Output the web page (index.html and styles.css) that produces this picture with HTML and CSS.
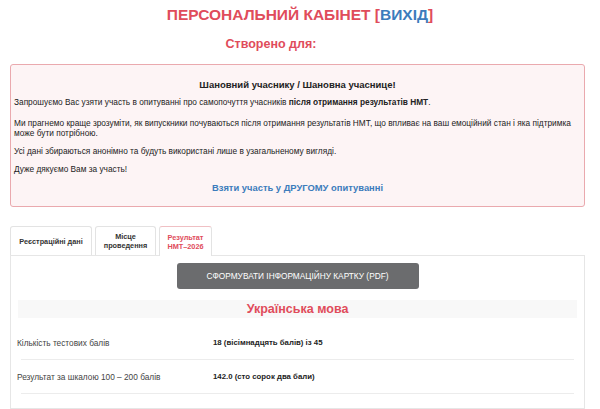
FILE: index.html
```html
<!DOCTYPE html>
<html lang="uk">
<head>
    <meta charset="UTF-8">
    <meta name="viewport" content="width=device-width, initial-scale=1.0">
    <title>Персональний кабінет</title>
    <link rel="stylesheet" href="styles.css">
</head>
<body>
<h1 class="title">ПЕРСОНАЛЬНИЙ КАБІНЕТ [<a href="#" class="logout">ВИХІД</a>]</h1>
<h2 class="created">Створено для:</h2>

<div class="notice">
    <h3>Шановний учаснику / Шановна учаснице!</h3>
    <p class="lead">Запрошуємо Вас узяти участь в опитуванні про самопочуття учасників <b>після отримання результатів НМТ</b>.</p>
    <p>Ми прагнемо краще зрозуміти, як випускники почуваються після отримання результатів НМТ, що впливає на ваш емоційний стан і яка підтримка може бути потрібною.</p>
    <p>Усі дані збираються анонімно та будуть використані лише в узагальненому вигляді.</p>
    <p>Дуже дякуємо Вам за участь!</p>
    <a href="#" class="survey-link">Взяти участь у ДРУГОМУ опитуванні</a>
</div>

<div class="tabs">
    <div class="tab">Реєстраційні дані</div>
    <div class="tab">Місце<br>проведення</div>
    <div class="tab active">Результат<br>НМТ–2026</div>
</div>

<div class="panel">
    <div class="actions">
        <button class="button">СФОРМУВАТИ ІНФОРМАЦІЙНУ КАРТКУ (PDF)</button>
    </div>
    <div class="subject">Українська мова</div>
    <div class="row">
        <div class="label">Кількість тестових балів</div>
        <div class="value">18 (вісімнадцять балів) із 45</div>
    </div>
    <div class="row">
        <div class="label">Результат за шкалою 100 – 200 балів</div>
        <div class="value">142.0 (сто сорок два бали)</div>
    </div>
</div>
</body>
</html>
```

FILE: styles.css
```css
body {
    margin: 0;
    font-family: "Liberation Sans", Arial, sans-serif;
    color: #222;
}

.title {
    margin: 0;
    padding-top: 5px;
    text-align: center;
    font-size: 15.5px;
    line-height: 20px;
    color: #e04c5b;
}
.logout { color: #3c7cbc; text-decoration: none; }

.created {
    margin: 0;
    padding: 11px 58px 0 0;
    text-align: center;
    font-size: 12.5px;
    line-height: 16px;
    color: #e04c5b;
}

.notice {
    margin: 12px 15px 0 10px;
    padding: 14px 3px 12px;
    background: #fdf4f5;
    border: 1px solid #eaa9ae;
    border-radius: 3px;
    text-align: center;
}
.notice h3 {
    margin: 0 0 6px;
    font-size: 9.5px;
    line-height: 12px;
}
.notice p {
    margin: 0 0 8px;
    text-align: left;
    font-size: 8.3px;
    line-height: 10px;
}
.notice .lead { margin-bottom: 11px; }
.survey-link {
    display: block;
    margin-top: 2px;
    font-size: 9.4px;
    line-height: 12px;
    font-weight: bold;
    color: #3c7cbc;
    text-decoration: none;
}

.tabs {
    display: flex;
    align-items: flex-end;
    gap: 3px;
    margin: 19px 15px 0 10px;
}
.tab {
    box-sizing: border-box;
    display: flex;
    align-items: center;
    justify-content: center;
    height: 29px;
    border: 1px solid #e3e3e3;
    border-bottom: none;
    border-radius: 3px 3px 0 0;
    font-size: 7.3px;
    font-weight: bold;
    line-height: 9px;
    text-align: center;
    color: #333;
}
.tab:first-child { width: 82px; }
.tab:nth-child(2) { width: 61px; }
.tab.active {
    width: 53px;
    height: 30px;
    margin-bottom: -1px;
    color: #e04c5b;
    border-color: #f0c0c4 #e3e3e3;
    background: #fff;
    position: relative;
}

.panel {
    margin: 0 15px 0 10px;
    padding: 7px 7px 14px;
    border: 1px solid #e6e6e6;
}
.actions { text-align: center; }
.button {
    width: 242px;
    height: 26px;
    border: none;
    border-radius: 3px;
    background: #6b6c6e;
    color: #fff;
    font-family: inherit;
    font-size: 8.3px;
}
.subject {
    margin-top: 11px;
    height: 18px;
    line-height: 18px;
    background: #f8f8f8;
    text-align: center;
    font-size: 12.5px;
    font-weight: bold;
    color: #e04c5b;
}
.row {
    display: flex;
    align-items: center;
    height: 33px;
    margin: 0 3px;
    border-bottom: 1px solid #ececec;
    font-size: 8.3px;
}
.subject + .row { margin-top: 8px; }
.label { width: 196px; margin-left: -4px; color: #444; }
.value { font-size: 7.8px; font-weight: bold; color: #222; }
```
